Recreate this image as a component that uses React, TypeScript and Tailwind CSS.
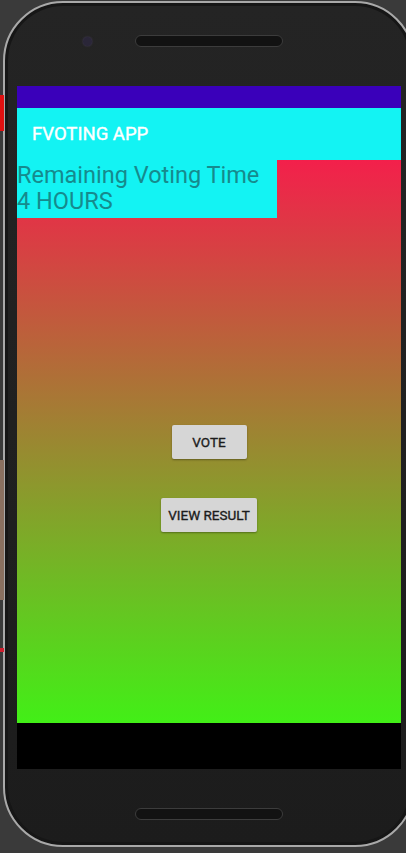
export default function App() {
  return (
    <div className="relative h-[853px] w-[406px] overflow-hidden bg-[#3a3a3a]" style={{ fontFamily: "Roboto, 'Noto Sans', sans-serif" }}>
      {/* desktop bits peeking on the left edge */}
      <div className="absolute left-0 top-[95px] h-[36px] w-[4px] bg-[#e01010]" />
      <div className="absolute left-0 top-[460px] h-[140px] w-[4px] bg-[#8a7060]" />
      <div className="absolute left-0 top-[648px] h-[4px] w-[4px] bg-[#d02030]" />

      {/* phone body */}
      <div className="ml-[3px] mt-[1px] flex h-[846px] w-[412px] flex-col rounded-[60px] border-2 border-[#a9a9a9] bg-gradient-to-b from-[#242424] to-[#1c1c1c] shadow-[inset_0_0_0_3px_#161616]">
        <div className="relative h-[83px] shrink-0">
          <div className="absolute left-[78px] top-[34px] size-[9px] rounded-full bg-[#2a2638] shadow-[0_0_2px_#4a4060]" />
          <div className="absolute left-[130px] top-[32px] h-[12px] w-[148px] rounded-full border border-[#3c3c3c] bg-[#121212]" />
        </div>

        {/* screen */}
        <div className="ml-[12px] flex h-[683px] w-[384px] flex-col">
          <div className="h-[22px] bg-[#3a00ba]" />
          <div className="flex h-[52px] items-center bg-[#13f3f3] pl-[15px] pt-[2px] text-[18.5px] text-white [-webkit-text-stroke:0.4px_white]">
            FVOTING APP
          </div>
          <div className="flex flex-1 flex-col bg-[linear-gradient(to_bottom,#f3204b,#42ef17)]">
            <div className="h-[58px] w-[260px] bg-[#13f3f3] pt-[2px] text-[23.5px] leading-[26px] text-[#168a8d]">
              <div>Remaining Voting Time</div>
              <div>4 HOURS</div>
            </div>
            <div className="mt-[207px] flex flex-col items-center gap-[39px]">
              <div className="flex h-[34px] w-[75px] items-center justify-center rounded-[2px] bg-[#d6d6d6] text-[13.5px] text-[#1c1c1c] shadow-[0_1px_2px_rgba(0,0,0,0.35)] [-webkit-text-stroke:0.35px_#1c1c1c]">
                VOTE
              </div>
              <div className="flex h-[34px] w-[96px] items-center justify-center rounded-[2px] bg-[#d6d6d6] text-[13.5px] text-[#1c1c1c] shadow-[0_1px_2px_rgba(0,0,0,0.35)] [-webkit-text-stroke:0.35px_#1c1c1c]">
                VIEW RESULT
              </div>
            </div>
          </div>
          <div className="h-[46px] bg-black" />
        </div>

        <div className="relative flex-1">
          <div className="absolute left-[130px] top-[39px] h-[12px] w-[148px] rounded-full border border-[#3c3c3c] bg-[#121212]" />
        </div>
      </div>
    </div>
  );
}
